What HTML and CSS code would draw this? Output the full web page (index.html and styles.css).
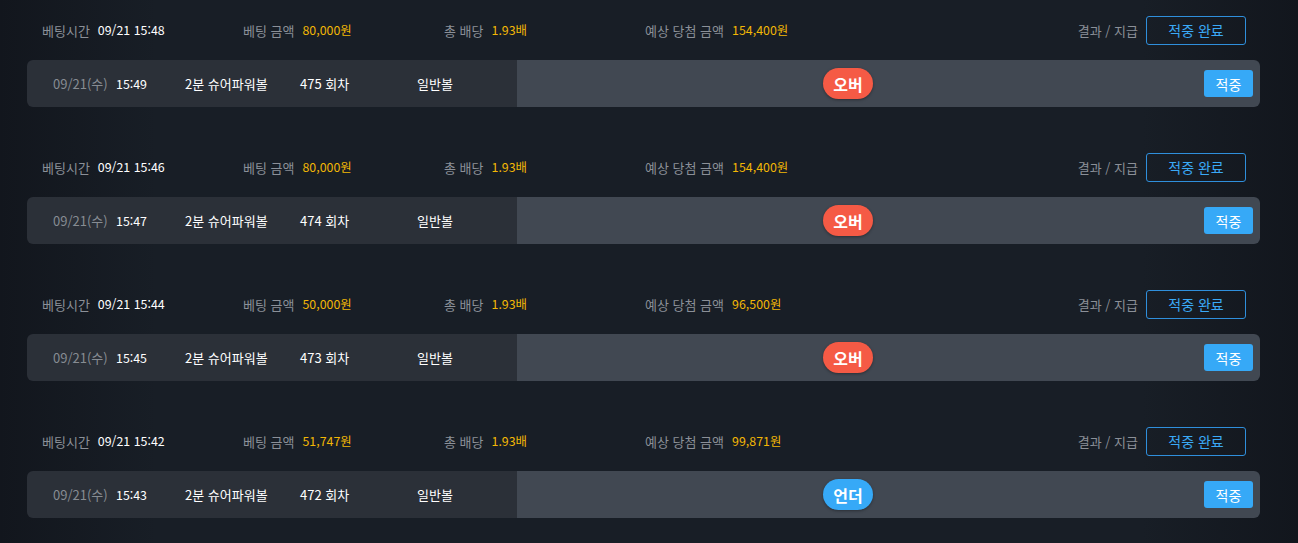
FILE: index.html
```html
<!DOCTYPE html>
<html lang="ko">
<head>
<meta charset="utf-8">
<link rel="stylesheet" href="styles.css">
</head>
<body>
<div class="list">
  <section class="bet">
    <div class="head">
      <div class="col"><span class="lbl">베팅시간</span><span class="val">09/21 15:48</span></div>
      <div class="col"><span class="lbl">베팅 금액</span><span class="amt">80,000원</span></div>
      <div class="col"><span class="lbl">총 배당</span><span class="amt">1.93배</span></div>
      <div class="col wide"><span class="lbl">예상 당첨 금액</span><span class="amt">154,400원</span></div>
      <div class="result"><span class="lbl">결과 / 지급</span><span class="done">적중 완료</span></div>
    </div>
    <div class="card">
      <div class="info">
        <span class="date">09/21(수)</span><span class="time">15:49</span><span class="game">2분 슈어파워볼</span><span class="round">475 회차</span><span class="type">일반볼</span>
      </div>
      <div class="pick"><span class="badge over">오버</span><span class="hit">적중</span></div>
    </div>
  </section>
  <section class="bet">
    <div class="head">
      <div class="col"><span class="lbl">베팅시간</span><span class="val">09/21 15:46</span></div>
      <div class="col"><span class="lbl">베팅 금액</span><span class="amt">80,000원</span></div>
      <div class="col"><span class="lbl">총 배당</span><span class="amt">1.93배</span></div>
      <div class="col wide"><span class="lbl">예상 당첨 금액</span><span class="amt">154,400원</span></div>
      <div class="result"><span class="lbl">결과 / 지급</span><span class="done">적중 완료</span></div>
    </div>
    <div class="card">
      <div class="info">
        <span class="date">09/21(수)</span><span class="time">15:47</span><span class="game">2분 슈어파워볼</span><span class="round">474 회차</span><span class="type">일반볼</span>
      </div>
      <div class="pick"><span class="badge over">오버</span><span class="hit">적중</span></div>
    </div>
  </section>
  <section class="bet">
    <div class="head">
      <div class="col"><span class="lbl">베팅시간</span><span class="val">09/21 15:44</span></div>
      <div class="col"><span class="lbl">베팅 금액</span><span class="amt">50,000원</span></div>
      <div class="col"><span class="lbl">총 배당</span><span class="amt">1.93배</span></div>
      <div class="col wide"><span class="lbl">예상 당첨 금액</span><span class="amt">96,500원</span></div>
      <div class="result"><span class="lbl">결과 / 지급</span><span class="done">적중 완료</span></div>
    </div>
    <div class="card">
      <div class="info">
        <span class="date">09/21(수)</span><span class="time">15:45</span><span class="game">2분 슈어파워볼</span><span class="round">473 회차</span><span class="type">일반볼</span>
      </div>
      <div class="pick"><span class="badge over">오버</span><span class="hit">적중</span></div>
    </div>
  </section>
  <section class="bet">
    <div class="head">
      <div class="col"><span class="lbl">베팅시간</span><span class="val">09/21 15:42</span></div>
      <div class="col"><span class="lbl">베팅 금액</span><span class="amt">51,747원</span></div>
      <div class="col"><span class="lbl">총 배당</span><span class="amt">1.93배</span></div>
      <div class="col wide"><span class="lbl">예상 당첨 금액</span><span class="amt">99,871원</span></div>
      <div class="result"><span class="lbl">결과 / 지급</span><span class="done">적중 완료</span></div>
    </div>
    <div class="card">
      <div class="info">
        <span class="date">09/21(수)</span><span class="time">15:43</span><span class="game">2분 슈어파워볼</span><span class="round">472 회차</span><span class="type">일반볼</span>
      </div>
      <div class="pick"><span class="badge under">언더</span><span class="hit">적중</span></div>
    </div>
  </section>
</div>
</body>
</html>
```

FILE: styles.css
```css
* { box-sizing: border-box; }
html, body { margin: 0; height: 100%; }
body {
  background: linear-gradient(to right, #12161d 0%, #181e26 12%, #181e26 88%, #12161d 100%);
  font-family: "Noto Sans CJK KR", "Noto Sans", sans-serif;
  font-size: 13px;
  color: #fff;
}
.list {
  padding: 13px 0 0 27px;
  width: 1260px;
}
.bet { margin-bottom: 43px; }
.head {
  height: 34px;
  display: flex;
  align-items: center;
  padding: 0 14px 0 15px;
  margin-bottom: 13px;
}
.col {
  width: 201px;
  display: flex;
  align-items: center;
  gap: 8px;
  white-space: nowrap;
}
.col.wide { width: auto; }
.lbl { color: #8b9098; }
.val { color: #fff; font-size: 12.4px; }
.amt { color: #f2b705; font-size: 12.4px; }
.result {
  margin-left: auto;
  display: flex;
  align-items: center;
  gap: 8px;
}
.done {
  width: 100px;
  height: 29px;
  border: 1px solid #2f8fdc;
  border-radius: 3px;
  color: #3aa9f6;
  font-size: 14px;
  display: flex;
  align-items: center;
  justify-content: center;
}
.card {
  height: 47px;
  display: flex;
  border-radius: 6px;
  overflow: hidden;
}
.info {
  width: 490px;
  background: #2b3038;
  display: flex;
  align-items: center;
  padding-left: 26px;
  white-space: nowrap;
}
.info span { display: block; }
.date { width: 63px; color: #878c93; }
.time { width: 69px; font-size: 12.4px; }
.game { width: 115px; }
.round { width: 117px; }
.pick {
  flex: 1;
  background: #414852;
  display: flex;
  align-items: center;
  padding: 0 7px 0 306px;
}
.badge {
  width: 50px;
  height: 31px;
  border-radius: 16px;
  color: #fff;
  font-weight: bold;
  font-size: 16px;
  display: flex;
  align-items: center;
  justify-content: center;
  box-shadow: 0 1px 3px rgba(0,0,0,0.35);
}
.over { background: #f55a45; }
.under { background: #36a9f7; }
.hit {
  margin-left: auto;
  width: 49px;
  height: 27px;
  background: #36a9f7;
  border-radius: 3px;
  color: #fff;
  font-size: 14px;
  display: flex;
  align-items: center;
  justify-content: center;
}
```
